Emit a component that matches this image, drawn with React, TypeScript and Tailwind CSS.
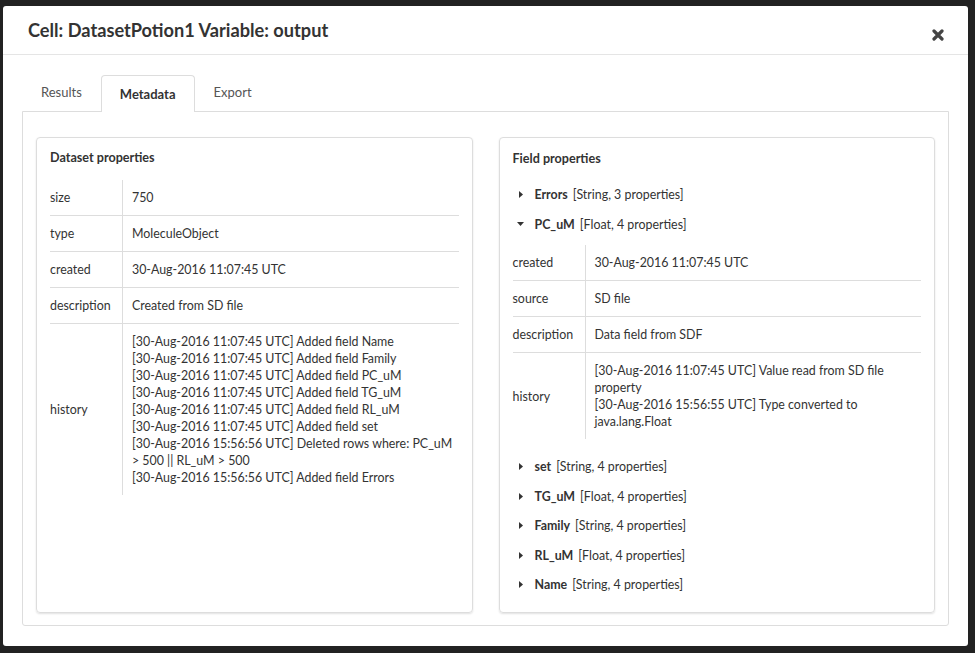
import React from "react";

const datasetRows: { label: string; value: string[] }[] = [
  { label: "size", value: ["750"] },
  { label: "type", value: ["MoleculeObject"] },
  { label: "created", value: ["30-Aug-2016 11:07:45 UTC"] },
  { label: "description", value: ["Created from SD file"] },
  {
    label: "history",
    value: [
      "[30-Aug-2016 11:07:45 UTC] Added field Name",
      "[30-Aug-2016 11:07:45 UTC] Added field Family",
      "[30-Aug-2016 11:07:45 UTC] Added field PC_uM",
      "[30-Aug-2016 11:07:45 UTC] Added field TG_uM",
      "[30-Aug-2016 11:07:45 UTC] Added field RL_uM",
      "[30-Aug-2016 11:07:45 UTC] Added field set",
      "[30-Aug-2016 15:56:56 UTC] Deleted rows where: PC_uM > 500 || RL_uM > 500",
      "[30-Aug-2016 15:56:56 UTC] Added field Errors",
    ],
  },
];

const pcRows: { label: string; value: string[] }[] = [
  { label: "created", value: ["30-Aug-2016 11:07:45 UTC"] },
  { label: "source", value: ["SD file"] },
  { label: "description", value: ["Data field from SDF"] },
  {
    label: "history",
    value: [
      "[30-Aug-2016 11:07:45 UTC] Value read from SD file property",
      "[30-Aug-2016 15:56:55 UTC] Type converted to java.lang.Float",
    ],
  },
];

function PropTable({ rows }: { rows: { label: string; value: string[] }[] }) {
  return (
    <div className="flex flex-col">
      {rows.map((r, i) => (
        <div
          key={r.label}
          className={`flex border-t ${i === 0 ? "border-transparent" : "border-[#ddd]"}`}
        >
          <div className="w-[72px] shrink-0 flex items-center py-[9px]">{r.label}</div>
          <div className="flex-1 border-l border-[#ddd] pl-[9px] pr-0 py-[9px]">
            {r.value.map((v, j) => (
              <div key={j}>{v}</div>
            ))}
          </div>
        </div>
      ))}
    </div>
  );
}

function Caret({ open }: { open?: boolean }) {
  return open ? (
    <svg width="7" height="4" viewBox="0 0 7 4" className="ml-[4px]">
      <path d="M0 0 L7 0 L3.5 4 Z" fill="#333" />
    </svg>
  ) : (
    <svg width="4" height="7" viewBox="0 0 4 7" className="ml-[6px]">
      <path d="M0 0 L4 3.5 L0 7 Z" fill="#333" />
    </svg>
  );
}

function FieldItem({ name, info, open }: { name: string; info: string; open?: boolean }) {
  return (
    <div className="flex items-center h-[29.5px]">
      <span className="w-[22px] flex items-center">
        <Caret open={open} />
      </span>
      <span className="font-bold">{name}</span>
      <span className="ml-[5px]">{info}</span>
    </div>
  );
}

export default function App() {
  return (
    <div
      className="min-h-screen bg-[#222] pt-[6px] pl-[3px] pr-[7px] pb-[7px] text-[12.4px] leading-[17px] text-[#333]"
      style={{ fontFamily: "Lato, 'Open Sans', sans-serif" }}
    >
      <div className="bg-white rounded-[3px] h-[640px] flex flex-col">
        {/* header */}
        <div className="h-[49px] border-b border-[#e5e5e5] flex items-start justify-between pl-[25px] pr-[24px]">
          <h4 className="text-[18.2px] font-bold leading-[22px] mt-[13px]">
            Cell: DatasetPotion1 Variable: output
          </h4>
          <svg width="12" height="12" viewBox="0 0 12 12" className="mt-[23px]">
            <path d="M2 2 L10 10 M10 2 L2 10" stroke="#444" strokeWidth="3.2" strokeLinecap="round" />
          </svg>
        </div>

        {/* body */}
        <div className="flex-1 flex flex-col pt-[19px] px-[19px] pb-[20px]">
          <div className="flex h-[37px] text-[13px]">
            <div className="px-[19px] flex items-center text-[#555]">Results</div>
            <div className="px-[18px] flex items-center font-bold border border-b-0 border-[#ddd] rounded-t-[4px] bg-white relative top-px">
              Metadata
            </div>
            <div className="px-[19px] flex items-center text-[#555]">Export</div>
          </div>
          <div className="flex-1 border border-[#ddd] rounded-b-[3px] grid grid-cols-2 gap-[26px] px-[13px] pt-[25px] pb-[12px]">
            {/* dataset */}
            <div className="border border-[#ddd] rounded-[4px] shadow-[0_1px_2px_rgba(0,0,0,0.12)] px-[13px] pt-[11px]">
              <div className="font-bold text-[12.6px] leading-[18px] mb-[12px]">Dataset properties</div>
              <PropTable rows={datasetRows} />
            </div>
            {/* fields */}
            <div className="border border-[#ddd] rounded-[4px] shadow-[0_1px_2px_rgba(0,0,0,0.12)] px-[13px] pt-[12px]">
              <div className="font-bold text-[12.6px] leading-[18px] mb-[12px]">Field properties</div>
              <FieldItem name="Errors" info="[String, 3 properties]" />
              <FieldItem name="PC_uM" info="[Float, 4 properties]" open />
              <div className="mt-[5px] mb-[13px]">
                <PropTable rows={pcRows} />
              </div>
              <FieldItem name="set" info="[String, 4 properties]" />
              <FieldItem name="TG_uM" info="[Float, 4 properties]" />
              <FieldItem name="Family" info="[String, 4 properties]" />
              <FieldItem name="RL_uM" info="[Float, 4 properties]" />
              <FieldItem name="Name" info="[String, 4 properties]" />
            </div>
          </div>
        </div>
      </div>
    </div>
  );
}
